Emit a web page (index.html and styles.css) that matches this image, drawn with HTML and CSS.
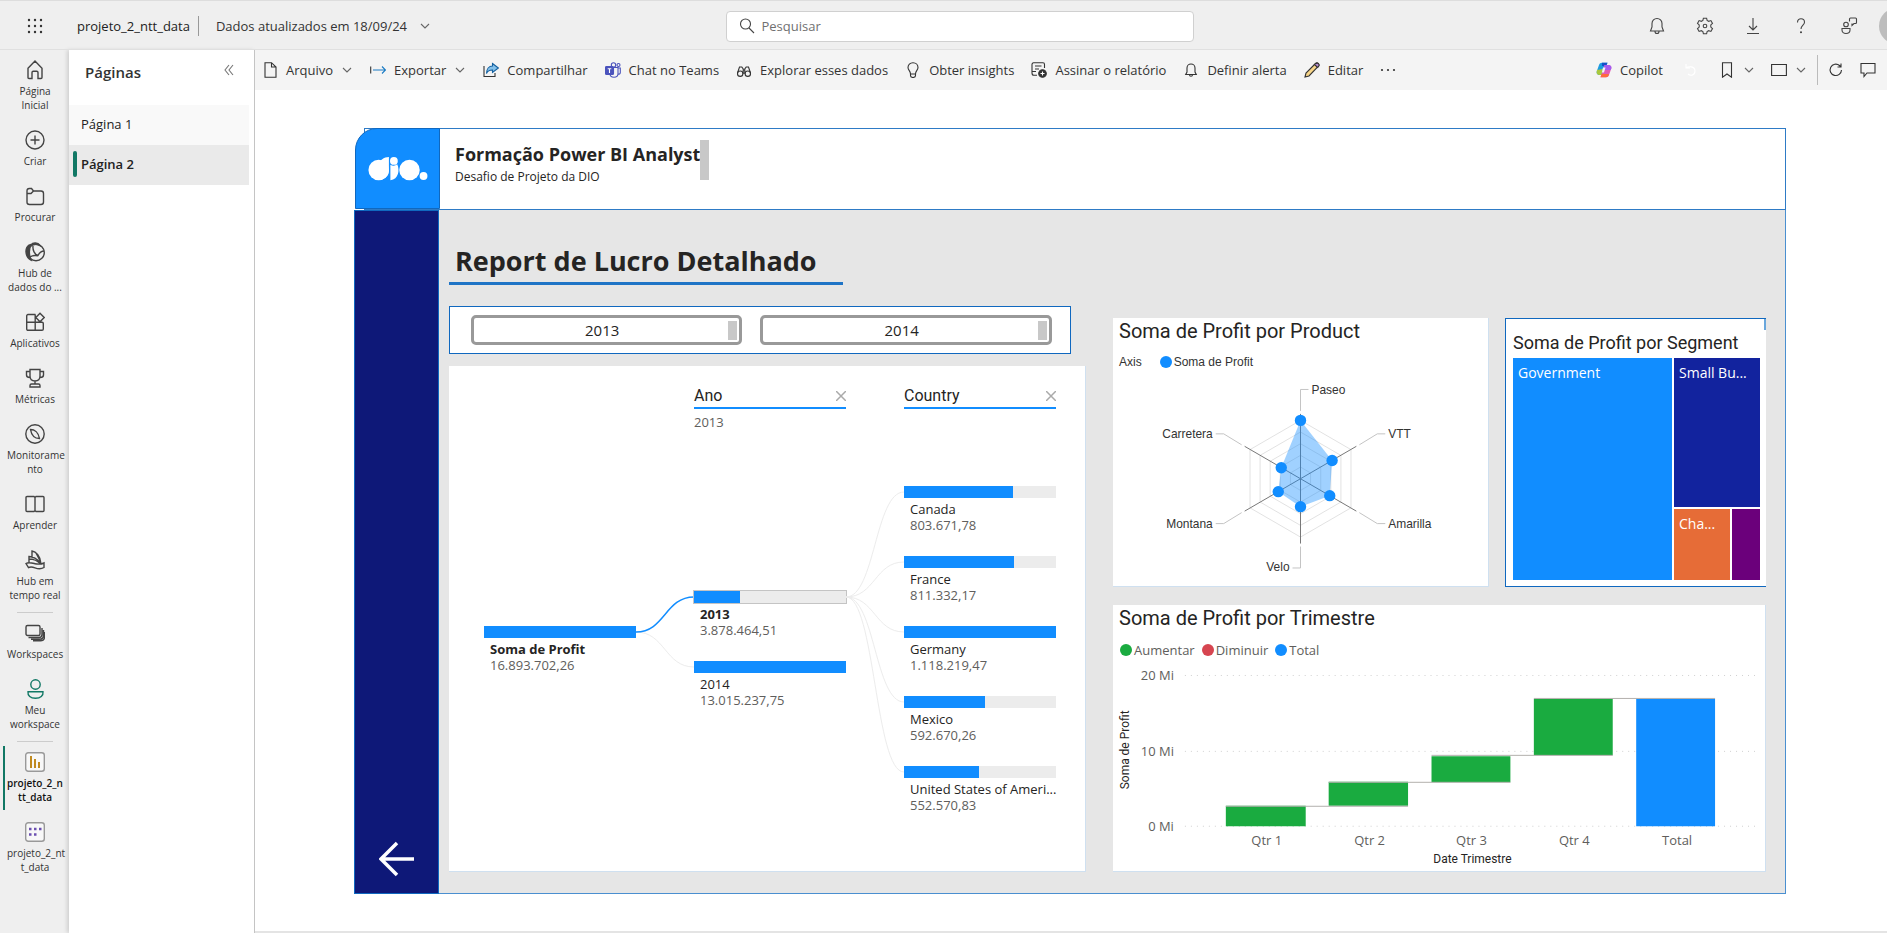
FILE: index.html
```html
<!DOCTYPE html>
<html lang="pt-BR">
<head>
<meta charset="utf-8">
<title>projeto_2_ntt_data</title>
<link rel="stylesheet" href="styles.css">
</head>
<body>
<header class="topbar">
  <button class="icon-btn waffle" aria-label="Inicializador de aplicativos">
    <svg width="16" height="16" viewBox="0 0 16 16" fill="#333"><circle cx="2" cy="2" r="1.2"/><circle cx="8" cy="2" r="1.2"/><circle cx="14" cy="2" r="1.2"/><circle cx="2" cy="8" r="1.2"/><circle cx="8" cy="8" r="1.2"/><circle cx="14" cy="8" r="1.2"/><circle cx="2" cy="14" r="1.2"/><circle cx="8" cy="14" r="1.2"/><circle cx="14" cy="14" r="1.2"/></svg>
  </button>
  <a class="file-name" href="#">projeto_2_ntt_data</a>
  <button class="updated">Dados atualizados em 18/09/24
    <svg class="chev" viewBox="0 0 12 12"><path d="M2 4l4 4 4-4"/></svg>
  </button>
  <label class="search">
    <svg width="16" height="16" viewBox="0 0 16 16" class="line"><circle cx="6.500" cy="6" r="5"/><path d="M10 10l5 5"/></svg>
    <input type="text" placeholder="Pesquisar" aria-label="Pesquisar">
  </label>
  <div class="top-actions">
    <button class="icon-btn" aria-label="Notificações"><svg width="18" height="18" viewBox="0 0 18 18" class="line"><path d="M9 1.500a5 5 0 0 0-5 5V10l-1.500 4h13L14 10V6.500a5 5 0 0 0-5-5zM7 14.500a2 2 0 0 0 4 0"/></svg></button>
    <button class="icon-btn" aria-label="Configurações"><svg width="18" height="18" viewBox="0 0 18 18" class="line"><path d="M7.400 1.200h3.200l.5 2.200 1.600.9 2.200-.7 1.600 2.800-1.700 1.500v2.200l1.700 1.500-1.600 2.800-2.200-.7-1.600.9-.5 2.200H7.400l-.5-2.200-1.600-.9-2.200.7-1.600-2.800 1.700-1.500V7.900L1.500 6.400l1.600-2.800 2.200.7 1.600-.9z"/><circle cx="9" cy="9" r="1.800"/></svg></button>
    <button class="icon-btn" aria-label="Baixar"><svg width="18" height="18" viewBox="0 0 18 18" class="line"><path d="M9 1v12M5 9l4 4 4-4M3 16.500h12"/></svg></button>
    <button class="icon-btn" aria-label="Ajuda"><svg width="18" height="18" viewBox="0 0 18 18" class="line"><path d="M5.500 5.500C5.500 3 7 1.800 9 1.800s3.500 1.300 3.500 3.400C12.500 8 9 8.300 9 12"/><circle cx="9" cy="15.200" r=".5"/></svg></button>
    <button class="icon-btn" aria-label="Comentários"><svg width="18" height="18" viewBox="0 0 18 18" class="line"><circle cx="6" cy="7.500" r="2.300"/><path d="M2 11.500h8v1.500c0 2.500-1.800 3.500-4 3.500s-4-1-4-3.500zM9.500 4.500V2c0-.6.400-1 1-1h5c.6 0 1 .4 1 1v3.500c0 .6-.4 1-1 1h-1.500L12 8.500v-2"/></svg></button>
  </div>
  <div class="avatar"></div>
</header>

<div class="shell">
  <nav class="rail">
    <a class="rail-item" href="#"><svg viewBox="0 0 20 20" class="rail-icon"><path d="M3 8.200L10 1l7 7.200v9.300c0 .6-.4 1-1 1h-3v-6c0-.8-.5-1.300-1.300-1.300H8.300c-.8 0-1.300.5-1.300 1.300v6H4c-.6 0-1-.4-1-1z"/></svg><span>Página Inicial</span></a>
    <a class="rail-item" href="#"><svg viewBox="0 0 20 20" class="rail-icon"><circle cx="10" cy="10" r="9"/><path d="M10 5.500v9M5.500 10h9"/></svg><span>Criar</span></a>
    <a class="rail-item" href="#"><svg viewBox="0 0 20 20" class="rail-icon"><path d="M2 5c0-1.500.8-2.500 2.300-2.500h2.200L8.500 5H16c1.500 0 2.500 1 2.500 2.500V16c0 1.500-1 2.500-2.500 2.500H4.500C3 18.500 2 17.500 2 16zM2 7.500h4L8.500 5"/></svg><span>Procurar</span></a>
    <a class="rail-item" href="#"><svg viewBox="0 0 20 20" class="rail-icon"><path d="M6 2.500C2 3 .8 7 1 10c.2 3.500 2 6.500 5 8-2-5-2.500-10 0-15.500zM6 3c2-3 7-2.500 9 .5C12 2 9 2 6 3z" fill="#444"/><circle cx="11" cy="10.500" r="8.300"/><path d="M8 4c-.5 4 1.500 8.500 5 9.500 1.500-3 3.500-4.500 6.300-4.500M5 15c2.500-1.800 5-1.800 8-1.200"/></svg><span class="clipped">Hub de<br>dados do ...</span></a>
    <a class="rail-item" href="#"><svg viewBox="0 0 20 20" class="rail-icon"><path d="M10.500 2.500H3A1.300 1.300 0 0 0 1.700 3.800V17A1.300 1.300 0 0 0 3 18.300h14a1.300 1.300 0 0 0 1.300-1.300v-5.500c0-.8-.5-1.300-1.300-1.300H1.700M10.200 2.500v15.800M15 1.200l4.200 4.300L15 9.700l-4.200-4.200z"/></svg><span>Aplicativos</span></a>
    <a class="rail-item" href="#"><svg viewBox="0 0 20 20" class="rail-icon"><path d="M5 1.500h10V8c0 3-2 5-5 5s-5-2-5-5zM5 3.500H1.500V7c0 1.500 1.500 2.500 3.500 2.500M15 3.500h3.500V7c0 1.500-1.500 2.500-3.500 2.500M10 13v3M5 19v-1.500c0-1 .5-1.500 1.500-1.500h7c1 0 1.500.5 1.500 1.500V19z"/></svg><span>Métricas</span></a>
    <a class="rail-item" href="#"><svg viewBox="0 0 20 20" class="rail-icon"><circle cx="10" cy="10" r="9.200"/><path d="M5.500 5.500c4 0 8 3 9 9-4.500 0-8-3-9-9z"/></svg><span>Monitorame nto</span></a>
    <a class="rail-item" href="#"><svg viewBox="0 0 20 20" class="rail-icon"><path d="M1 3.500c0-.6.400-1 1-1h7l1 1 1-1h7c.6 0 1 .4 1 1v13c0 .6-.4 1-1 1h-7l-1-1-1 1H2c-.6 0-1-.4-1-1zM10 3v14.500"/></svg><span>Aprender</span></a>
    <a class="rail-item" href="#"><svg viewBox="0 0 20 20" class="rail-icon"><path d="M1 13.500c2.500-1.500 6-.5 9 .2 3.500.8 6 .8 9-.7v4.500c-2.500 1.500-6 1.500-9 .3-2.500-1-4.500-1.300-6.500-.3zM4 12.800V6.500c3 0 9 2 11.500 7.300M7 7V1c4 .5 8.500 5.500 8.800 12M11 3c1 2 4 6 4.500 10M4 9c4 0 9 2 11 4.500"/></svg><span>Hub em tempo real</span></a>
    <hr class="rail-sep">
    <a class="rail-item" href="#"><svg viewBox="0 0 20 20" class="rail-icon"><rect x="1" y="2.500" width="14" height="10" rx="1.500"/><path d="M3.500 14.500H14c2 0 3-1 3-3V5M6 16.200h8.500c2.500 0 4-1.500 4-4V7M8 17.800h7.500c2.500 0 4-1.800 4-4V9"/></svg><span>Workspaces</span></a>
    <a class="rail-item person" href="#"><svg viewBox="0 0 20 20" class="rail-icon"><circle cx="10.500" cy="5.500" r="4.700"/><path d="M3 12.800h15c.5 4-2.500 6.500-7.500 6.500S2.500 16.800 3 12.800z"/></svg><span>Meu workspace</span></a>
    <hr class="rail-sep">
    <a class="rail-item active" href="#"><svg viewBox="0 0 20 20" class="rail-icon"><rect x=".7" y=".7" width="18.600" height="18.600" rx="2.500" fill="#f8f8f8" stroke="#999"/><path d="M6 4v12M10 7v9M14 10v6" stroke="#c08a20" stroke-width="2"/></svg><span>projeto_2_n tt_data</span></a>
    <a class="rail-item" href="#"><svg viewBox="0 0 20 20" class="rail-icon"><rect x=".7" y=".7" width="18.600" height="18.600" rx="2.500" fill="#f8f8f8" stroke="#999"/><path d="M4 7h2.500M9 7h2.500M14 7h2.500M4 12.500h2.500M9 12.500h2.500" stroke="#6b4fb0" stroke-width="2.500"/></svg><span>projeto_2_nt t_data</span></a>
  </nav>

  <aside class="pages">
    <div class="pages-head">
      <h2>Páginas</h2>
      <button class="icon-btn" aria-label="Recolher"><svg width="10" height="12" viewBox="0 0 10 12" class="line"><path d="M5 1L1 6l4 5M9 1L5 6l4 5"/></svg></button>
    </div>
    <a class="page-link" href="#">Página 1</a>
    <a class="page-link current" href="#">Página 2</a>
  </aside>

  <div class="main">
    <div class="toolbar">
      <button class="tool"><svg viewBox="0 0 16 16" class="ticon"><path d="M3 .7h6.500L14 5v10.300H3zM9.500 .7V5H14"/></svg>Arquivo<svg class="chev" viewBox="0 0 12 12"><path d="M2 4l4 4 4-4"/></svg></button>
      <button class="tool"><svg viewBox="0 0 16 16" class="ticon arrow"><path d="M.7 4.500v7" stroke="#333"/><path d="M3 8h12.500M12 4.500L15.500 8 12 11.500"/></svg>Exportar<svg class="chev" viewBox="0 0 12 12"><path d="M2 4l4 4 4-4"/></svg></button>
      <button class="tool"><svg viewBox="0 0 16 16" class="ticon"><path d="M1 4v10.500h11V11"/><path d="M9.500 1.500L15.300 6l-5.800 4.500V8C6 8 4.500 9 3.500 11.500 3.500 7 6 4 9.500 4z" fill="#83c0ea" stroke="#1461a0"/></svg>Compartilhar</button>
      <button class="tool"><svg viewBox="0 0 16 16" class="ticon teams"><path d="M9 5.500h4v6c0 2.500-1.500 3.800-4 3.800S5 14 5 11.500M13 6h2.300v4.500c0 1-1 1.800-2.300 1.800"/><circle cx="8.500" cy="3" r="2.200"/><circle cx="13.500" cy="3" r="1.500"/><rect x=".5" y="4.500" width="8" height="8" rx="1" fill="#4b53bc"/><path d="M2.700 6.700h3.600M4.500 6.700V11" stroke="#fff"/></svg>Chat no Teams</button>
      <button class="tool"><svg viewBox="0 0 16 16" class="ticon"><circle cx="4.200" cy="11.700" r="2.700"/><circle cx="11.800" cy="11.700" r="2.700"/><path d="M1.500 11L3.500 5h2.300l1.400 2v5M14.500 11L12.500 5h-2.300L8.800 7v5M7.200 8h1.600"/></svg>Explorar esses dados</button>
      <button class="tool"><svg viewBox="0 0 16 16" class="ticon"><path d="M8 .7c-3 0-5 2.200-5 4.800C3 8 5.500 8.800 5.500 12h5C10.500 8.800 13 8 13 5.500 13 2.900 11 .7 8 .7zM5.500 12v1.500c0 1.200 1 2 2.500 2s2.500-.8 2.500-2V12"/></svg>Obter insights</button>
      <button class="tool"><svg viewBox="0 0 16 16" class="ticon"><path d="M13.500 6V2.500c0-1-.6-1.700-1.500-1.700H2.500C1.600.8 1 1.500 1 2.500V11c0 1.500.8 2.300 2 2.300h3M4 4h6.500M4 7h4M1 9.500h4"/><circle cx="11.500" cy="11.500" r="3.800" fill="#333"/><path d="M11.500 9.500v4M9.500 11.500h4" stroke="#fff"/></svg>Assinar o relatório</button>
      <button class="tool"><svg viewBox="0 0 16 16" class="ticon"><path d="M8 2a4 4 0 0 0-4 4v4l-1.300 2.500h10.600L12 10V6a4 4 0 0 0-4-4zM6.500 12.800a1.500 1.500 0 0 0 3 0"/></svg>Definir alerta</button>
      <button class="tool"><svg viewBox="0 0 16 16" class="ticon"><path d="M1 15l1-4L11.500 1.500c.8-.8 2-.8 2.700 0s.8 2 0 2.800L5 14z" fill="#f7d588"/><path d="M10.500 2.500l3 3 1-1c.7-.8.700-2 0-2.800s-2-.8-2.700 0z" fill="#b58bd0"/></svg>Editar</button>
      <button class="tool" aria-label="Mais opções"><svg viewBox="0 0 16 16" class="ticon"><g fill="#333" stroke="none"><circle cx="2" cy="8" r="1.100"/><circle cx="8" cy="8" r="1.100"/><circle cx="14" cy="8" r="1.100"/></g></svg></button>
      <div class="tools-right">
        <button class="tool"><svg viewBox="0 0 16 16" class="ticon copilot"><path d="M6 .8h5.500L9 8 7.500 13H3.500C1.500 13 .2 11.500.7 9.500L3 3C3.500 1.500 4.500.8 6 .8z" fill="#1c9be0"/><path d="M1 8l6-1-1.500 6h-2C1.500 13 .2 11.500.7 9.500z" fill="#a9c83c"/><path d="M6 .8h5.500L10 4H6z" fill="#1450c8"/><path d="M10 15.200H4.500L7 8l1.500-5h4c2 0 3.300 1.500 2.800 3.500L13 13c-.5 1.500-1.500 2.200-3 2.200z" fill="#e35bb4"/><path d="M8.500 3h4c2 0 3.300 1.500 2.800 3.500L14.700 8H7z" fill="#a35cf0"/><path d="M4.500 15.200L5.500 12H13c-.5 2.300-1.500 3.200-3 3.200z" fill="#ff6a3c"/><path d="M7 5.500h2.500L8 10.500H5.800z" fill="#f4f4f4"/></svg>Copilot</button>
        <button class="tool undo" aria-label="Redefinir"><svg viewBox="0 0 16 16" class="ticon"><path d="M3 2v4h4M3 6c2-2 9-2 9 3s-5 5-7 3"/></svg></button>
        <button class="tool" aria-label="Indicadores"><svg viewBox="0 0 16 16" class="ticon"><path d="M3.500 .8h9v14.400L8 12l-4.500 3.200z"/></svg><svg class="chev" viewBox="0 0 12 12"><path d="M2 4l4 4 4-4"/></svg></button>
        <button class="tool" aria-label="Exibição"><svg viewBox="0 0 16 16" class="ticon"><path d="M.6 2.500h14.800v11H.6z"/></svg><svg class="chev" viewBox="0 0 12 12"><path d="M2 4l4 4 4-4"/></svg></button>
        <span class="tool-sep"></span>
        <button class="tool" aria-label="Atualizar"><svg viewBox="0 0 16 16" class="ticon"><path d="M13.500 8a5.700 5.700 0 1 1-2-4.500L13 5M13 1.500V5H9.500"/></svg></button>
        <button class="tool" aria-label="Comentar"><svg viewBox="0 0 16 16" class="ticon"><path d="M1 1.500h14v9.500H7L4 14.500V11H1z"/></svg></button>
      </div>
    </div>

    <div class="stage">
      <div class="report">
        <header class="report-head">
          <svg class="logo" viewBox="0 0 84 81" role="img" aria-label="dio.">
            <g fill="#fff"><circle cx="22.700" cy="42" r="10.500"/><path d="M23 33c3-1 4.500-4.300 10.200-4.300V43c0 5-4 8-8 9z"/><circle cx="38.300" cy="32.700" r="4"/><path d="M34.700 36.700c2.300 1.300 5 1.200 7-.5 2.800 6 1.500 15.500-7 16.300z"/><circle cx="54.300" cy="42" r="10.500"/><circle cx="68.700" cy="48.200" r="4"/></g>
          </svg>
          <div class="report-name">
            <h1>Formação Power BI Analyst</h1>
            <p>Desafio de Projeto da DIO</p>
          </div>
          <span class="thumb"></span>
        </header>
        <div class="side">
          <button class="back" aria-label="Voltar"><svg width="36" height="36" viewBox="0 0 36 36" fill="none" stroke="#fff" stroke-width="3.500"><path d="M35 18H2M18 2L2 18l16 16"/></svg></button>
        </div>
        <main class="board">
          <h2 class="board-title">Report de Lucro Detalhado</h2>
          <div class="columns">
            <div class="left">
              <div class="slicer">
                <button>2013<i></i></button>
                <button>2014<i></i></button>
              </div>
              <section class="card tree">
                <div class="level root">
                  <div class="level-head blank"></div>
                  <div class="node on"><div class="bar"><div style="width:100%"></div></div><b>Soma de Profit</b><span>16.893.702,26</span></div>
                </div>
                <svg class="links" viewBox="0 0 58 360" width="58" height="360"><path d="M0 192C29 192 29 227 58 227" stroke="#ececec"/><path d="M0 192C29 192 29 157 58 157" stroke="#118dff" stroke-width="1.500"/></svg>
                <div class="level year">
                  <div class="level-head"><strong>Ano</strong><button aria-label="Remover Ano"><svg viewBox="0 0 10 10"><path d="M0 0l10 10M10 0L0 10"/></svg></button></div>
                  <div class="picked">2013</div>
                  <div class="node on"><div class="bar framed"><div style="width:30%"></div></div><b>2013</b><span>3.878.464,51</span></div>
                  <div class="node"><div class="bar"><div style="width:100%"></div></div><em>2014</em><span>13.015.237,75</span></div>
                </div>
                <svg class="links" viewBox="0 0 58 360" width="58" height="360" stroke="#ececec"><path d="M0 157C29 157 29 52 58 52M0 157C29 157 29 122 58 122M0 157C29 157 29 192 58 192M0 157C29 157 29 262 58 262M0 157C29 157 29 332 58 332"/></svg>
                <div class="level country">
                  <div class="level-head"><strong>Country</strong><button aria-label="Remover Country"><svg viewBox="0 0 10 10"><path d="M0 0l10 10M10 0L0 10"/></svg></button></div>
                  <div class="picked"></div>
                  <div class="node"><div class="bar"><div style="width:72%"></div></div><em>Canada</em><span>803.671,78</span></div>
                  <div class="node"><div class="bar"><div style="width:72.500%"></div></div><em>France</em><span>811.332,17</span></div>
                  <div class="node"><div class="bar"><div style="width:100%"></div></div><em>Germany</em><span>1.118.219,47</span></div>
                  <div class="node"><div class="bar"><div style="width:53%"></div></div><em>Mexico</em><span>592.670,26</span></div>
                  <div class="node"><div class="bar"><div style="width:49.400%"></div></div><em>United States of Ameri...</em><span>552.570,83</span></div>
                </div>
              </section>
            </div>
            <div class="right">
              <div class="pair">
                <section class="card product">
                  <h3>Soma de Profit por Product</h3>
                  <div class="legend arial"><span>Axis</span><span class="key blue">Soma de Profit</span></div>
                  <svg class="chart" viewBox="-188 -103 376 209">
                    <g fill="none" stroke="#e2e2e2">
                      <path d="M0-58.500L50.600-29.200V29.200L0 58.500-50.600 29.200V-29.200z"/>
                      <path d="M0-46.800L40.500-23.400V23.400L0 46.800-40.500 23.400V-23.400z"/>
                      <path d="M0-35.100L30.400-17.500V17.500L0 35.100-30.400 17.500V-17.500z"/>
                      <path d="M0-23.400L20.300-11.700V11.700L0 23.400-20.300 11.700V-11.700z"/>
                      <path d="M0-11.700L10.100-5.800V5.800L0 11.700-10.100 5.800V-5.800z"/>
                    </g>
                    <path d="M0-65V65M-56-32.500L56 32.500M-56 32.500L56-32.500" stroke="#777"/>
                    <path d="M0-58.500L31.700-18.300 29.300 17 0 28-22.300 13-19.300-11z" fill="#118dff" fill-opacity=".4"/>
                    <g fill="#118dff"><circle cx="0" cy="-58.500" r="5.700"/><circle cx="31.700" cy="-18.300" r="5.700"/><circle cx="29.300" cy="17" r="5.700"/><circle cx="0" cy="28" r="5.700"/><circle cx="-22.300" cy="13" r="5.700"/><circle cx="-19.300" cy="-11" r="5.700"/></g>
                    <path fill="none" stroke="#c4c4c4" d="M0-68V-89.500H8M59-34L77-45H85M59 34L77 45H85M0 68V89.500H-8M-59 34L-77 45H-85M-59-34L-77-45H-85"/>
                    <g class="radar-text"><text x="11" y="-85">Paseo</text><text x="88" y="-41">VTT</text><text x="88" y="49">Amarilla</text><text x="-11" y="93" text-anchor="end">Velo</text><text x="-88" y="49" text-anchor="end">Montana</text><text x="-88" y="-41" text-anchor="end">Carretera</text></g>
                  </svg>
                </section>
                <section class="card segment">
                  <h3>Soma de Profit por Segment</h3>
                  <div class="treemap">
                    <div class="gov">Government</div><div class="small">Small Bu...</div><div class="chan">Cha...</div><div class="mid"></div>
                  </div>
                </section>
              </div>
              <section class="card quarter">
                <h3>Soma de Profit por Trimestre</h3>
                <div class="legend"><span class="key green">Aumentar</span><span class="key red">Diminuir</span><span class="key blue">Total</span></div>
                <svg class="chart" viewBox="0 0 653 209">
                  <path d="M72 13.500H646M72 89.500H646M72 164.500H646" stroke="#d0d0d0" stroke-dasharray="1 5"/>
                  <g fill="#1aab40"><path d="M113 144h80v20.500h-80zM216 120h79.500v24H216zM319 94.500h79v26h-79zM421.500 37h79v56.500h-79z"/></g>
                  <path d="M524 37h79v127.500h-79z" fill="#118dff"/>
                  <path d="M113 144.500H295.500M216 120.500H398M319 93.500H500.500M421.500 36.500H603" stroke="#b3b0ad"/>
                  <g class="tick" text-anchor="end"><text x="61" y="18">20 Mi</text><text x="61" y="94">10 Mi</text><text x="61" y="169">0 Mi</text></g>
                  <g class="tick" text-anchor="middle"><text x="154" y="183">Qtr 1</text><text x="257" y="183">Qtr 2</text><text x="359" y="183">Qtr 3</text><text x="462" y="183">Qtr 4</text><text x="565" y="183">Total</text></g>
                  <text class="axis-name" x="360" y="201" text-anchor="middle">Date Trimestre</text>
                  <text class="axis-name" transform="translate(16 88) rotate(-90)" text-anchor="middle">Soma de Profit</text>
                </svg>
              </section>
            </div>
          </div>
        </main>
      </div>
    </div>
  </div>
</div>
</body>
</html>
```
FILE: styles.css
```css
* { box-sizing: border-box; }
body {
  margin: 0;
  min-height: 100vh;
  display: flex;
  flex-direction: column;
  overflow: hidden;
  background: #efefef;
  color: #333;
  font: 13px/16px "Open Sans", "Noto Sans", sans-serif;
}
h1, h2, h3, p { margin: 0; }
a { color: inherit; text-decoration: none; }
button { padding: 0; border: 0; background: none; color: inherit; font: inherit; }
svg { display: block; flex: none; }
.line, .ticon, .chev, .rail-icon { fill: none; stroke: #444; stroke-width: 1.1; }
.chev { width: 12px; height: 12px; stroke: #666; }

.topbar {
  position: relative;
  display: flex;
  align-items: center;
  height: 50px;
  padding-top: 2px;
  border-bottom: 1px solid #e0e0e0;
  border-top: 1px solid #ddd;
}
.icon-btn { display: grid; place-items: center; }
.waffle { width: 70px; }
.file-name { margin-left: 7px; padding-right: 8px; line-height: 20px; border-right: 1px solid #999; color: #222; }
.updated { display: flex; align-items: center; gap: 12px; margin-left: 17px; }
.search {
  position: absolute;
  left: 38.5%;
  width: 468px;
  height: 31px;
  display: flex;
  align-items: center;
  gap: 6px;
  padding: 0 11px 0 12px;
  border: 1px solid #d0d0d0;
  border-radius: 4px;
  background: #fff;
}
.search input { flex: 1; padding: 0; border: 0; outline: 0; font: inherit; background: none; }
.search input::placeholder { color: #707070; opacity: 1; }
.top-actions { display: flex; gap: 30px; margin-left: auto; padding-right: 21px; }
.avatar { width: 8px; height: 36px; overflow: hidden; display: flex; }
.avatar::before { content: ""; flex: none; width: 36px; height: 36px; border-radius: 50%; background: #bdbdbd; }

.shell { flex: 1; display: flex; }
.rail { width: 69px; padding-top: 2px; }
.rail-item {
  display: flex;
  flex-direction: column;
  align-items: center;
  gap: 4px;
  padding: 8px 6px 10px 7px;
  font-size: 10px;
  line-height: 14px;
  text-align: center;
}
.rail-item span { width: 56px; }
.rail-item .clipped { white-space: nowrap; }
.rail-icon { width: 20px; height: 20px; stroke-width: 1.4; }
.person .rail-icon { stroke: #117865; }
.rail-sep { width: 36px; height: 1px; margin: 0 auto 2px 17px; border: 0; background: #ccc; }
.active { position: relative; color: #111; font-weight: 600; }
.active::before { content: ""; position: absolute; left: 3px; top: 2px; bottom: 4px; width: 2px; background: #117865; }

.pages { width: 186px; border-right: 1px solid #c4c4c4; background: #fff; box-shadow: -2px 0 4px #0002; }
.pages-head { display: flex; justify-content: space-between; align-items: center; height: 55px; padding: 0 20px 12px 16px; }
.pages-head h2 { font-size: 15px; font-weight: 600; color: #333; }
.pages-head .icon-btn { padding-bottom: 4px; }
.pages-head svg { stroke: #777; }
.page-link { display: flex; align-items: center; height: 40px; margin-right: 5px; padding: 0 0 2px 12px; background: #f9f9f9; color: #222; }
.current { position: relative; background: #eaeaea; font-weight: 600; }
.current::before { content: ""; position: absolute; left: 4px; width: 4px; height: 26px; border-radius: 2px; background: #117865; }

.main { flex: 1; min-width: 0; display: flex; flex-direction: column; background: #fff; border-bottom: 2px solid #e4e4e4; }
.toolbar { display: flex; align-items: center; gap: 17px; height: 40px; padding: 0 11px 0 7px; background: #f4f4f4; white-space: nowrap; }
.tool { display: flex; align-items: center; gap: 8px; }
.ticon { width: 16px; height: 16px; stroke: #333; }
.arrow { stroke: #1a7bc4; }
.teams { stroke: #4b53bc; }
.copilot { stroke: none; }
.tools-right { display: flex; align-items: center; gap: 16px; margin-left: auto; }
.undo { margin: 0 4px; }
.undo .ticon { stroke: #fff; }
.tool-sep { width: 1px; height: 30px; margin: 0 -6px; background: #bbb; }

.stage { flex: 1; display: flex; padding: 38px 101px 37px 99px; }
.report { flex: 1; display: grid; grid-template-columns: 85px 1fr; grid-template-rows: 82px 1fr; color: #252423; }
.report-head { position: relative; grid-column: 1 / 3; display: flex; align-items: flex-start; padding: 0 0 1px 1px; }
.report-head::before { content: ""; position: absolute; inset: 0 0 0 10px; border: 1px solid #2e7bc6; }
.logo { position: relative; width: 85px; height: 81px; border: 1px solid #1068bf; border-radius: 22px 0 0 0; background: #118dff; }
.report-name { padding: 14px 0 0 15px; }
.report-name h1 { font-size: 18px; line-height: 24px; }
.report-name p { margin-top: 3px; font-size: 12px; line-height: 16px; }
.thumb { width: 9px; height: 40px; margin-top: 12px; background: #c8c8c8; }
.side { display: flex; flex-direction: column; justify-content: flex-end; align-items: center; padding-bottom: 16px; border: 1px solid #1068bf; background: #0e1878; }
.board { display: flex; flex-direction: column; padding: 29px 19px 21px 10px; border: solid #4a8fd0; border-width: 0 1px 1px 0; background: #e6e6e6; }
.board-title { width: 394px; height: 46px; padding-left: 6px; border-bottom: 3px solid #1f74c6; font-size: 27px; line-height: 44px; white-space: nowrap; }
.columns { flex: 1; display: flex; gap: 27px; padding-top: 21px; }
.left { flex: 637 1 0; display: flex; flex-direction: column; gap: 12px; }
.right { flex: 653 1 0; min-width: 0; display: grid; grid-template-rows: 268fr 267fr; gap: 18px; padding-top: 12px; }
.card { background: #fff; border: solid #cfe0f0; border-width: 0 1px 1px 0; }

.slicer { display: flex; gap: 18px; height: 48px; margin-right: 15px; padding: 8px 18px 8px 21px; border: 1px solid #1068bf; background: #fff; }
.slicer button { flex: 271 1 0; display: flex; align-items: center; padding: 0 2px; border: 3px solid #999; border-radius: 5px; font-size: 15px; }
.slicer button + button { flex-grow: 292; }
.slicer button::before { content: ""; margin-right: auto; }
.slicer i { width: 9px; height: 19px; margin-left: auto; background: #c8c8c8; }

.tree { flex: 1; display: flex; padding: 18px 0 0 35px; }
.level { width: 152px; }
.level-head { display: flex; justify-content: space-between; align-items: center; height: 25px; border-bottom: 2px solid #118dff; }
.level-head strong { font: 16px/20px Roboto, sans-serif; }
.level-head svg { width: 10px; height: 10px; fill: none; stroke: #aaa; stroke-width: 1.5; }
.blank { height: 56px; border: 0; }
.picked { height: 31px; line-height: 26px; color: #605e5c; }
.links { margin-top: 56px; fill: none; }
.country .picked { margin-bottom: 46px; }
.year .picked { margin-bottom: 151px; }
.root .blank { margin-bottom: 186px; }
.node { display: flex; flex-direction: column; height: 70px; white-space: nowrap; }
.node b, .node em, .node span { padding-left: 6px; font-style: normal; }
.node span { color: #605e5c; }
.bar { height: 12px; margin-bottom: 3px; background: #ececec; }
.bar div { height: 100%; background: #118dff; }
.framed { outline: 1px solid #c4c4c4; }

.pair { display: grid; grid-template-columns: 376fr 261fr; gap: 16px; }
h3 { padding: 1px 0 0 6px; font: 20px/24px Roboto, sans-serif; white-space: nowrap; }
.product, .segment { min-width: 0; }
.legend { display: flex; gap: 7px; margin-top: 11px; padding-left: 7px; line-height: 18px; color: #605e5c; }
.key { display: flex; align-items: center; gap: 2px; }
.key::before { content: ""; width: 12px; height: 12px; border-radius: 50%; background: #118dff; }
.green::before { background: #1aab40; }
.red::before { background: #d64550; }
.arial { gap: 18px; margin-top: 10px; padding-left: 6px; font: 12px/18px "Liberation Sans", Arial, sans-serif; color: #333; }
.chart { width: 100%; height: auto; }
.product .chart { margin-top: 5px; }
.radar-text { font: 12px "Liberation Sans", Arial, sans-serif; fill: #333; }
.segment { position: relative; display: flex; flex-direction: column; padding: 12px 6px 6px 7px; border: solid #1068bf; border-width: 1px 0 1px 1px; }
.segment::after { content: ""; position: absolute; right: 0; top: 0; width: 2px; height: 11px; background: #6aa7dc; }
.segment h3 { margin-bottom: 4px; padding-left: 0; font-size: 18px; line-height: 22px; }
.treemap { flex: 1; display: grid; grid-template-columns: 159fr 56fr 28fr; grid-template-rows: 149fr 70fr; gap: 2px; font-size: 14px; line-height: 20px; color: #fff; white-space: nowrap; }
.treemap div { min-width: 0; padding: 5px; }
.gov { grid-row: 1 / 3; background: #118dff; }
.small { grid-column: 2 / 4; background: #12239e; }
.chan { background: #e66c37; }
.mid { background: #6b007b; }
.quarter .chart { margin-top: 3px; }
.tick { font-size: 13px; fill: #605e5c; }
.axis-name { font: 12px Roboto, sans-serif; fill: #252423; }
```
